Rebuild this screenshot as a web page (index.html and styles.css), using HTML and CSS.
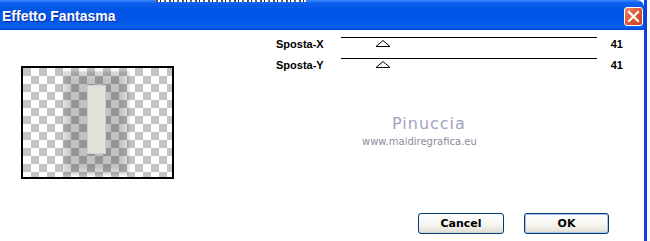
FILE: index.html
```html
<!DOCTYPE html>
<html>
<head>
<meta charset="utf-8">
<link rel="stylesheet" href="styles.css">
</head>
<body>
<div class="window">
  <div class="titlebar">
    <span class="clip-strip"></span>
    <span class="title">Effetto Fantasma</span>
    <span class="close"><svg width="13" height="13" viewBox="0 0 13 13"><path d="M2 2 L11 11 M11 2 L2 11" stroke="#fff" stroke-width="2.2" stroke-linecap="square"/></svg></span>
  </div>
  <div class="content">
    <div class="main">
      <div class="preview-col">
        <div class="preview">
          <div class="ghost-outer"></div>
          <div class="ghost-inner"></div>
          <div class="bar"></div>
        </div>
      </div>
      <div class="controls">
        <div class="row">
          <span class="label">Sposta-X</span>
          <span class="track"><svg class="thumb" width="16" height="7" viewBox="0 0 16 7"><path d="M8 0.5 L15 6.5 L1 6.5 Z" fill="#fff" stroke="#000" stroke-width="1"/></svg></span>
          <span class="value">41</span>
        </div>
        <div class="row">
          <span class="label">Sposta-Y</span>
          <span class="track"><svg class="thumb" width="16" height="7" viewBox="0 0 16 7"><path d="M8 0.5 L15 6.5 L1 6.5 Z" fill="#fff" stroke="#000" stroke-width="1"/></svg></span>
          <span class="value">41</span>
        </div>
        <div class="wm-name">Pinuccia</div>
        <div class="wm-url">www.maidiregrafica.eu</div>
      </div>
    </div>
    <div class="buttons">
      <button class="btn cancel">Cancel</button>
      <button class="btn ok">OK</button>
    </div>
  </div>
</div>
</body>
</html>
```

FILE: styles.css
```css
html, body {
  margin: 0;
  padding: 0;
  background: #fff;
  overflow: hidden;
}
body {
  width: 650px;
  height: 241px;
}
.window {
  width: 644px;
  height: 241px;
  border-right: 3px solid #0a44dc;
  box-sizing: content-box;
  background: #fff;
}
.titlebar {
  position: relative;
  height: 30px;
  display: flex;
  align-items: center;
  justify-content: space-between;
  padding: 0 1px 0 2px;
  box-sizing: border-box;
  border-top-right-radius: 7px;
  background: linear-gradient(#3d8bff 0, #0e5ef0 3px, #0055e6 10px, #0257e8 22px, #0a62f2 27px, #0045d0 30px);
}
.clip-strip {
  position: absolute;
  left: 156px;
  top: 0;
  width: 150px;
  height: 2px;
  background: repeating-linear-gradient(90deg, #555 0 2px, #fff 2px 4px, #333 4px 5px, #fff 5px 8px, #666 8px 10px, #fff 10px 13px);
}
.title {
  font-family: "Liberation Sans Narrow", "Liberation Sans", sans-serif;
  font-weight: bold;
  font-size: 14px;
  color: #fff;
  text-shadow: 1px 1px 0 #0a2a9c;
  margin-top: 2px;
}
.close {
  width: 19px;
  height: 19px;
  box-sizing: border-box;
  border: 1px solid #fff;
  border-radius: 3px;
  background: linear-gradient(135deg, #f08a6a 0%, #e05a36 45%, #c8401e 100%);
  display: flex;
  align-items: center;
  justify-content: center;
  margin-top: 2px;
}
.content {
  height: 211px;
  display: flex;
  flex-direction: column;
}
.main {
  height: 183px;
  display: flex;
}
.preview-col {
  padding: 36px 0 0 21px;
}
.preview {
  position: relative;
  width: 153px;
  height: 113px;
  box-sizing: border-box;
  border: 2px solid #000;
  background-color: #fff;
  background-image:
    linear-gradient(45deg, #c4c4c4 25%, transparent 25%, transparent 75%, #c4c4c4 75%),
    linear-gradient(45deg, #c4c4c4 25%, transparent 25%, transparent 75%, #c4c4c4 75%);
  background-size: 16px 16px;
  background-position: 8px 0, 0 8px;
  overflow: hidden;
}
.ghost-outer {
  position: absolute;
  left: 40px;
  top: 3px;
  width: 66px;
  height: 104px;
  background: rgba(0, 0, 0, 0.15);
  filter: blur(1px);
}
.ghost-inner {
  position: absolute;
  left: 46px;
  top: 8px;
  width: 54px;
  height: 94px;
  background: rgba(0, 0, 0, 0.1);
  filter: blur(2px);
}
.bar {
  position: absolute;
  left: 64px;
  top: 17px;
  width: 19px;
  height: 69px;
  box-sizing: border-box;
  background: #e2e1dc;
  border: 1px solid #cfcec8;
}
.controls {
  margin-left: 102px;
  padding-top: 7px;
  width: 347px;
}
.row {
  display: flex;
  height: 21px;
  font-family: "Liberation Sans", Arial, sans-serif;
  font-weight: bold;
  font-size: 11px;
  line-height: 14px;
  color: #000;
}
.label {
  width: 65px;
}
.track {
  position: relative;
  width: 256px;
  height: 0;
  border-top: 1px solid #000;
}
.thumb {
  position: absolute;
  left: 34px;
  top: 2px;
}
.value {
  width: 26px;
  text-align: right;
}
.wm-name {
  margin: 36px 0 0 116px;
  font-family: "DejaVu Sans", sans-serif;
  font-size: 16px;
  line-height: 18px;
  letter-spacing: 1px;
  color: #a2a2bf;
}
.wm-url {
  margin: 3px 0 0 86px;
  font-family: "DejaVu Sans", sans-serif;
  font-size: 10px;
  line-height: 12px;
  color: #8c8c9c;
}
.buttons {
  display: flex;
  justify-content: flex-end;
  gap: 20px;
  padding-right: 35px;
}
.btn {
  height: 21px;
  padding: 0;
  box-sizing: border-box;
  border: 1px solid #003c74;
  border-radius: 3px;
  background: linear-gradient(#ffffff 0%, #f4f3ee 60%, #e6e3da 90%, #d6d0c5 100%);
  font-family: "DejaVu Sans", Tahoma, sans-serif;
  font-weight: bold;
  font-size: 11px;
  color: #000;
}
.cancel {
  width: 86px;
}
.ok {
  width: 85px;
  box-shadow: inset 0 0 0 1px #a9c4ef;
}
```
